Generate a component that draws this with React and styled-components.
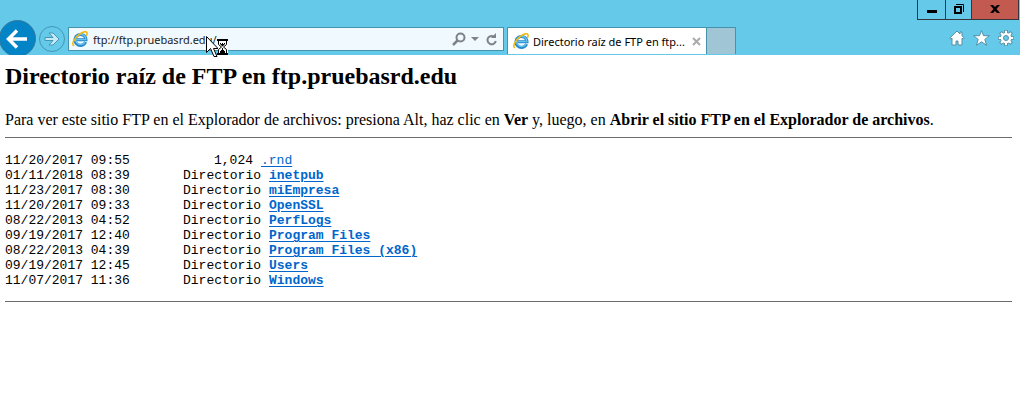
import React from "react";
import styled, { createGlobalStyle } from "styled-components";

const Global = createGlobalStyle`
  * { box-sizing: border-box; }
  body { margin: 0; background: #fff; color: #000; }
  svg { display: block; flex: none; }
`;

const uiFont = `"Noto Sans", "Open Sans", sans-serif`;

const Chrome = styled.header`
  background: #65c9ea;
  font-family: ${uiFont};
  font-size: 11px;
`;

const TitleBar = styled.div`
  display: flex;
  justify-content: flex-end;
  height: 20px;
  padding-right: 1px;
`;

const WindowButton = styled.button`
  display: flex;
  align-items: center;
  justify-content: center;
  width: ${(p) => p.$width}px;
  height: 20px;
  margin: 0 0 0 -1px;
  padding: 0 0 2px;
  border: 1px solid #35353b;
  border-top: 0;
  background: ${(p) => (p.$danger ? "#c35a50" : "transparent")};
`;

const NavBar = styled.div`
  display: flex;
  align-items: flex-end;
  height: 35px;
  overflow: hidden;
`;

const NavButton = styled.button`
  display: flex;
  padding: 0;
  border: 0;
  background: transparent;
`;

const AddressBox = styled.div`
  display: flex;
  align-items: center;
  flex: 426 1 0;
  height: 24px;
  margin: 0 3px 4px 2px;
  padding: 0 5px 0 3px;
  border: 1px solid #4593ac;
  background: #f0f9fd;
`;

const AddressInput = styled.input`
  flex: 1;
  min-width: 0;
  padding: 2px 0 0 5px;
  border: 0;
  outline: 0;
  background: transparent;
  color: #222;
  font: 11px/18px ${uiFont};
`;

const IconButton = styled.button`
  display: flex;
  align-items: center;
  padding: 0;
  border: 0;
  background: transparent;
  margin-left: ${(p) => p.$gap || 0}px;
`;

const TabStrip = styled.div`
  display: flex;
  flex: 513 1 0;
  height: 28px;
  padding-bottom: 1px;
`;

const Tab = styled.div`
  display: flex;
  align-items: center;
  width: 200px;
  padding: 0 5px;
  border: 1px solid #4593ac;
  border-bottom: 0;
  background: #fff;
`;

const TabTitle = styled.span`
  flex: 1;
  padding: 2px 0 0 4px;
  line-height: 18px;
  white-space: nowrap;
`;

const NewTab = styled.button`
  width: 29px;
  padding: 0;
  border: 1px solid #4593ac;
  border-width: 1px 1px 0 0;
  background: #a0c5d5;
`;

const Tools = styled.div`
  display: flex;
  align-items: center;
  gap: 8px;
  margin: 0 0 0 auto;
  padding: 0 6px 5px 0;
`;

const Page = styled.main`
  padding: 8px 8px 0 5px;
  font-family: "Liberation Serif", "Times New Roman", serif;
  font-size: 16px;
  line-height: 18px;
`;

const Title = styled.h1`
  margin: 0;
  font-size: 24px;
  line-height: 27px;
`;

const Intro = styled.p`
  margin: 21px 0 8px;
`;

const Rule = styled.hr`
  height: 1px;
  margin: 0;
  border: 0;
  background: #6c6c6c;
`;

const Listing = styled.table`
  margin: 15px 0 13px;
  border-collapse: collapse;
  font: 13px/15px "Liberation Mono", "Courier New", monospace;
  white-space: nowrap;
`;

const Cell = styled.td`
  padding: 0;
`;

const DateCell = styled(Cell)`
  width: 128px;
`;

const SizeCell = styled(Cell)`
  width: 128px;
  padding-right: ${(p) => (p.$file ? 8 : 0)}px;
  text-align: right;
`;

const NameCell = styled(Cell)`
  padding-left: ${(p) => (p.$file ? 0 : 8)}px;
`;

const FileLink = styled.a`
  color: #0066cc;
  font-weight: ${(p) => (p.$file ? 400 : 700)};
  text-underline-offset: 2px;
  text-decoration-thickness: 1px;
`;

const Pointer = styled.svg`
  position: absolute;
  left: 206px;
  top: 36px;
  pointer-events: none;
`;

const IELogo = () => (
  <svg width="16" height="16" viewBox="0 0 16 16" fill="none">
    <path d="M13.600 11A5.500 5.500 0 1 1 14 8.800H4.500" stroke="#2487cc" strokeWidth="3" />
    <path d="M13 11.200A5.100 5.100 0 1 1 13.800 8.600H4.500" stroke="#67c2f0" strokeWidth="1.400" />
    <path d="M2.200 14.800C-1.200 14 2.200 7.200 7.400 3.300C11.500.2 15.200-.4 15.100 2.600C15 3.400 14.700 4 14.400 4.700" stroke="#f2b90f" strokeWidth="1.600" />
  </svg>
);

const entries = [
  ["11/20/2017 09:55", "1,024", ".rnd"],
  ["01/11/2018 08:39", "Directorio", "inetpub"],
  ["11/23/2017 08:30", "Directorio", "miEmpresa"],
  ["11/20/2017 09:33", "Directorio", "OpenSSL"],
  ["08/22/2013 04:52", "Directorio", "PerfLogs"],
  ["09/19/2017 12:40", "Directorio", "Program Files"],
  ["08/22/2013 04:39", "Directorio", "Program Files (x86)"],
  ["09/19/2017 12:45", "Directorio", "Users"],
  ["11/07/2017 11:36", "Directorio", "Windows"],
];

export default function App() {
  return (
    <>
      <Global />
      <Chrome>
        <TitleBar>
          <WindowButton $width={29} aria-label="Minimizar">
            <svg width="10" height="10"><path d="M0 6h10v3H0z" /></svg>
          </WindowButton>
          <WindowButton $width={27} aria-label="Restaurar">
            <svg width="10" height="10" fill="none" stroke="#000">
              <path d="M2 .5h7.500V8" />
              <path d="M1 3h6v6H1z" strokeWidth="2" />
            </svg>
          </WindowButton>
          <WindowButton $width={48} $danger aria-label="Cerrar">
            <svg width="10" height="8"><path d="M0 0h3l2 2 2-2h3L6.500 4 10 8H7L5 6 3 8H0l3.500-4z" /></svg>
          </WindowButton>
        </TitleBar>
        <NavBar>
          <NavButton aria-label="Atrás">
            <svg width="36" height="35" viewBox="0 0 36 35">
              <circle cx="17.500" cy="18.500" r="18" fill="#0284c6" stroke="#37799a" />
              <path d="M27 19H9M17 10.500L8.500 19L17 27.500" fill="none" stroke="#fff" strokeWidth="3.500" />
            </svg>
          </NavButton>
          <NavButton aria-label="Adelante">
            <svg width="30" height="35" viewBox="0 0 30 35" fill="none">
              <circle cx="16" cy="19" r="12.500" stroke="#4596b2" />
              <path d="M9 17.500h8l-4-4.500h4l6 6-6 6h-4l4-4.500H9z" fill="#c5e9f5" stroke="#4596b2" />
            </svg>
          </NavButton>
          <AddressBox>
            <IELogo />
            <AddressInput aria-label="Dirección" defaultValue="ftp://ftp.pruebasrd.edu/" />
            <IconButton aria-label="Buscar">
              <svg width="14" height="14" fill="none" stroke="#7d8387" strokeWidth="2">
                <circle cx="8.500" cy="5.500" r="4" /><path d="M5.500 8.500L1 13" strokeWidth="2.500" />
              </svg>
            </IconButton>
            <IconButton $gap={5} aria-label="Opciones de búsqueda">
              <svg width="8" height="4"><path d="M0 0h8L4 4z" fill="#7d8387" /></svg>
            </IconButton>
            <IconButton $gap={7} aria-label="Actualizar">
              <svg width="12" height="13" fill="none" stroke="#7d8387" strokeWidth="2">
                <path d="M9 4.500A4.200 4.200 0 1 0 9.800 8" /><path d="M10 0v5H5z" fill="#7d8387" stroke="none" />
              </svg>
            </IconButton>
          </AddressBox>
          <TabStrip>
            <Tab>
              <IELogo />
              <TabTitle>Directorio raíz de FTP en ftp...</TabTitle>
              <IconButton aria-label="Cerrar pestaña">
                <svg width="9" height="9"><path d="M1 1l7 7M8 1L1 8" stroke="#aaa" strokeWidth="2" /></svg>
              </IconButton>
            </Tab>
            <NewTab aria-label="Nueva pestaña" />
            <Tools>
              <IconButton aria-label="Inicio">
                <svg width="16" height="16" fill="#fff" stroke="#568fa5">
                  <path d="M8 1L.8 8l1 1.200L3 8.200V15h4v-4h2v4h4V8.200l1.200 1L15.300 8 13 5.800V2h-2v2z" />
                </svg>
              </IconButton>
              <IconButton aria-label="Favoritos">
                <svg width="17" height="16" fill="#fff" stroke="#568fa5">
                  <path d="M8.500.6l2 5.100H16.400l-4.600 3.700 1.800 5.900-5.100-3.500-5.100 3.500 1.800-5.900L.6 5.700h5.900z" />
                </svg>
              </IconButton>
              <IconButton aria-label="Herramientas">
                <svg width="16" height="16" viewBox="0 0 16 16" fill="none">
                  <path d="M8 0v16M0 8h16M2.300 2.300l11.400 11.400M13.700 2.300L2.300 13.700" stroke="#568fa5" strokeWidth="3.600" />
                  <circle cx="8" cy="8" r="6" fill="#568fa5" />
                  <path d="M8 .8v14.400M.8 8h14.400M3 3l10 10M13 3L3 13" stroke="#fff" strokeWidth="2" />
                  <circle cx="8" cy="8" r="5.200" fill="#fff" />
                  <circle cx="8" cy="8" r="2.500" fill="#65c9ea" stroke="#568fa5" />
                </svg>
              </IconButton>
            </Tools>
          </TabStrip>
        </NavBar>
      </Chrome>
      <Page>
        <Title>Directorio raíz de FTP en ftp.pruebasrd.edu</Title>
        <Intro>
          Para ver este sitio FTP en el Explorador de archivos: presiona Alt, haz clic en <b>Ver</b> y, luego, en{" "}
          <b>Abrir el sitio FTP en el Explorador de archivos</b>.
        </Intro>
        <Rule />
        <Listing>
          <tbody>
            {entries.map(([date, size, name]) => {
              const file = size !== "Directorio";
              return (
                <tr key={name}>
                  <DateCell>{date}</DateCell>
                  <SizeCell $file={file}>{size}</SizeCell>
                  <NameCell $file={file}>
                    <FileLink $file={file} href={`#${name}`}>{name}</FileLink>
                  </NameCell>
                </tr>
              );
            })}
          </tbody>
        </Listing>
        <Rule />
      </Page>
      <Pointer width="24" height="24" viewBox="0 0 24 24" aria-hidden="true">
        <path d="M.5.500v16l4-4 3.500 8h3L7.500 12.500H12z" fill="#fff" stroke="#000" />
        <path d="M12 4h10v15H12z" fill="#fff" />
        <path d="M11 3h11v2H11zM11 17h11v2H11z" />
        <path d="M12.500 5v3.500l3 2.500-3 2.500V17M20.500 5v3.500l-3 2.500 3 2.500V17" fill="none" stroke="#000" />
        <path d="M14 7h1v1h1V7h1v1h1V7h1v1l-2.500 2.500L14 8zM16 12h1v2h1v1h1v2h-5v-2h1v-1h1z" />
      </Pointer>
    </>
  );
}
